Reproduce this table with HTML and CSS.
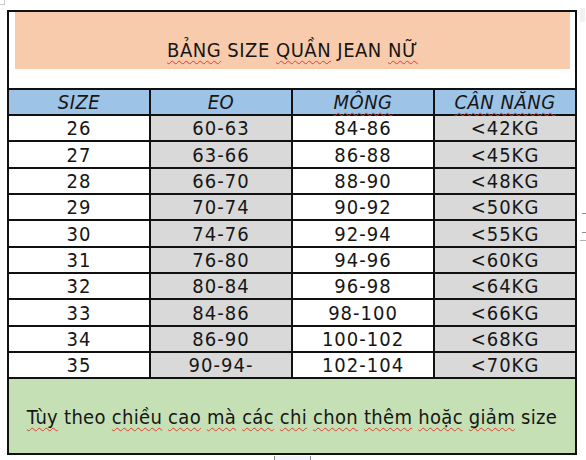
FILE: index.html
```html
<!DOCTYPE html>
<html lang="vi">
<head>
<meta charset="utf-8">
<title>Bảng size quần jean nữ</title>
<link rel="stylesheet" href="styles.css">
</head>
<body>
<div class="page">
  <span class="mark mark-tl"></span>
  <span class="mark mark-tr"></span>
  <span class="mark mark-r1"></span>
  <span class="mark mark-r2"></span>
  <span class="mark mark-r3"></span>
  <span class="mark mark-b"></span>
  <table class="sheet">
    <tr class="title-row">
      <td colspan="4">
        <div class="title-band"><span class="sp">BẢNG</span> SIZE <span class="sp">QUẦN</span> JEAN <span class="sp">NỮ</span></div>
      </td>
    </tr>
    <tr class="head">
      <th>SIZE</th>
      <th>EO</th>
      <th><span class="sp">MÔNG</span></th>
      <th><span class="sp">CÂN NĂNG</span></th>
    </tr>
    <tr><td>26</td><td class="g">60-63</td><td>84-86</td><td class="g">&lt;42KG</td></tr>
    <tr class="t"><td>27</td><td class="g">63-66</td><td>86-88</td><td class="g">&lt;45KG</td></tr>
    <tr><td>28</td><td class="g">66-70</td><td>88-90</td><td class="g">&lt;48KG</td></tr>
    <tr><td>29</td><td class="g">70-74</td><td>90-92</td><td class="g">&lt;50KG</td></tr>
    <tr class="t"><td>30</td><td class="g">74-76</td><td>92-94</td><td class="g">&lt;55KG</td></tr>
    <tr><td>31</td><td class="g">76-80</td><td>94-96</td><td class="g">&lt;60KG</td></tr>
    <tr><td>32</td><td class="g">80-84</td><td>96-98</td><td class="g">&lt;64KG</td></tr>
    <tr class="t"><td>33</td><td class="g">84-86</td><td>98-100</td><td class="g">&lt;66KG</td></tr>
    <tr><td>34</td><td class="g">86-90</td><td>100-102</td><td class="g">&lt;68KG</td></tr>
    <tr><td>35</td><td class="g">90-94-</td><td>102-104</td><td class="g">&lt;70KG</td></tr>
    <tr class="note-row">
      <td colspan="4"><span class="sp">Tùy</span> theo <span class="sp">chiều</span> <span class="sp">cao</span> <span class="sp">mà</span> <span class="sp">các</span> <span class="sp">chi</span> <span class="sp">chon</span> <span class="sp">thêm</span> <span class="sp">hoặc</span> <span class="sp">giảm</span> size</td>
    </tr>
  </table>
</div>
</body>
</html>
```
FILE: styles.css
```css
html, body {
  margin: 0;
  padding: 0;
  background: #ffffff;
}
.page {
  position: relative;
  width: 586px;
  height: 460px;
  padding: 10px 0 0 7px;
  box-sizing: border-box;
  font-family: "DejaVu Sans Condensed", "DejaVu Sans", sans-serif;
  font-stretch: condensed;
  color: #161616;
}
.sheet {
  border-collapse: collapse;
  table-layout: fixed;
  width: 570px;
  border: 2px solid #111;
}
.sheet td, .sheet th {
  border: 2px solid #111;
  width: 142px;
  height: 24px;
  padding: 0;
  text-align: center;
  vertical-align: middle;
  font-size: 20px;
  font-weight: normal;
  line-height: 22px;
  letter-spacing: 1px;
}
.sheet tr.t td {
  height: 25px;
}
.sheet td.g {
  background: #d9d9d9;
}
.title-row td {
  height: 56px;
  padding: 0 5px 19px 6px;
  vertical-align: top;
  border-bottom: 2px solid #111;
}
.title-band {
  background: #f8cbad;
  height: 57px;
  padding-top: 27px;
  box-sizing: border-box;
  font-size: 20px;
  line-height: 22px;
  letter-spacing: 0.5px;
  text-align: center;
}
.head th {
  background: #9dc3e6;
  font-style: italic;
  letter-spacing: 0.5px;
}
.note-row td {
  height: 72px;
  background: #c5e0b4;
  font-size: 20px;
  letter-spacing: 0.3px;
  padding-top: 2px;
}
.sp {
  text-decoration: underline wavy #e23b2e;
  text-decoration-thickness: 1px;
  text-underline-offset: 3px;
  text-decoration-skip-ink: none;
}
.mark {
  position: absolute;
  display: block;
}
.mark-tl {
  left: 0;
  top: 0;
  width: 4px;
  height: 4px;
  border-right: 1px solid #c8c8c8;
  border-bottom: 1px solid #c8c8c8;
}
.mark-tr {
  left: 580px;
  top: 8px;
  width: 5px;
  height: 14px;
  background: #f1f1f1;
}
.mark-r1, .mark-r2, .mark-r3 {
  left: 582px;
  width: 4px;
  height: 1px;
  background: #8c8c8c;
}
.mark-r1 { top: 213px; }
.mark-r2 { top: 232px; }
.mark-r3 { top: 240px; left: 580px; width: 6px; background: #b0b0b0; }
.mark-b {
  left: 274px;
  top: 456px;
  width: 35px;
  height: 4px;
  background: #f3f3fb;
  border-left: 1px solid #888;
  border-right: 1px solid #888;
}
```
